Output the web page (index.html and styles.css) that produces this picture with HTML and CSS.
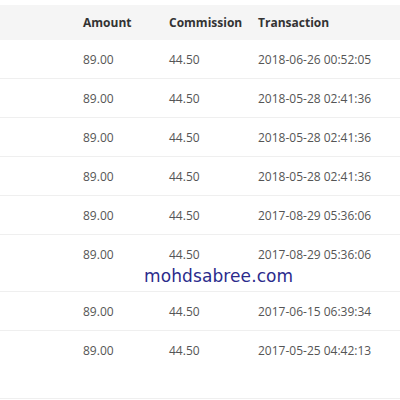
FILE: index.html
```html
<!DOCTYPE html>
<html lang="en">
<head>
  <meta charset="UTF-8" />
  <title>Commission</title>
  <link rel="stylesheet" href="styles.css">
</head>
<body>

  <div class="wrap">
    <table class="history">
      <thead>
        <tr>
          <th class="col-id"></th>
          <th class="col-amount">Amount</th>
          <th class="col-comm">Commission</th>
          <th>Transaction</th>
        </tr>
      </thead>
      <tbody>
        <tr><td></td><td>89.00</td><td>44.50</td><td>2018-06-26 00:52:05</td></tr>
        <tr><td></td><td>89.00</td><td>44.50</td><td>2018-05-28 02:41:36</td></tr>
        <tr><td></td><td>89.00</td><td>44.50</td><td>2018-05-28 02:41:36</td></tr>
        <tr><td></td><td>89.00</td><td>44.50</td><td>2018-05-28 02:41:36</td></tr>
        <tr><td></td><td>89.00</td><td>44.50</td><td>2017-08-29 05:36:06</td></tr>
        <tr class="tall"><td></td><td>89.00</td><td>44.50</td><td>2017-08-29 05:36:06</td></tr>
        <tr><td></td><td>89.00</td><td>44.50</td><td>2017-06-15 06:39:34</td></tr>
        <tr class="last"><td></td><td>89.00</td><td>44.50</td><td>2017-05-25 04:42:13</td></tr>
      </tbody>
    </table>

    <!-- watermark over the screenshot -->
    <div class="watermark">mohdsabree.com</div>
  </div>

</body>
</html>
```

FILE: styles.css
```css
body {
  margin: 0;
  padding: 0;
  background: white;
  font-family: 'Open Sans', sans-serif;
  font-size: 12px;
  color: #555;
}
.wrap {
  position: relative;
  padding-top: 5px;
}
.history {
  width: 100%;
  border-collapse: collapse;
  table-layout: fixed;
}
.history th,
.history td {
  text-align: left;
  vertical-align: top;
  padding: 13px 8px 11px;
  line-height: 14px;
  white-space: nowrap;
}
.history th {
  background-color: #f5f5f5;
  color: #333;
  font-weight: bold;
  padding: 11px 8px 10px;
}
.history td {
  border-bottom: 1px solid #efefef;
}
.col-id { width: 59px; }
.col-amount { width: 70px; }
.col-comm { width: 73px; }

.history tr.tall td { padding-bottom: 29px; }
.history tr.last td { padding-bottom: 40px; }

.watermark {
  position: absolute;
  left: 144px;
  top: 266px;
  font-family: 'DejaVu Sans', sans-serif;
  font-size: 17px;
  color: #2b2b8c;
  letter-spacing: 0.1px;
}
```
